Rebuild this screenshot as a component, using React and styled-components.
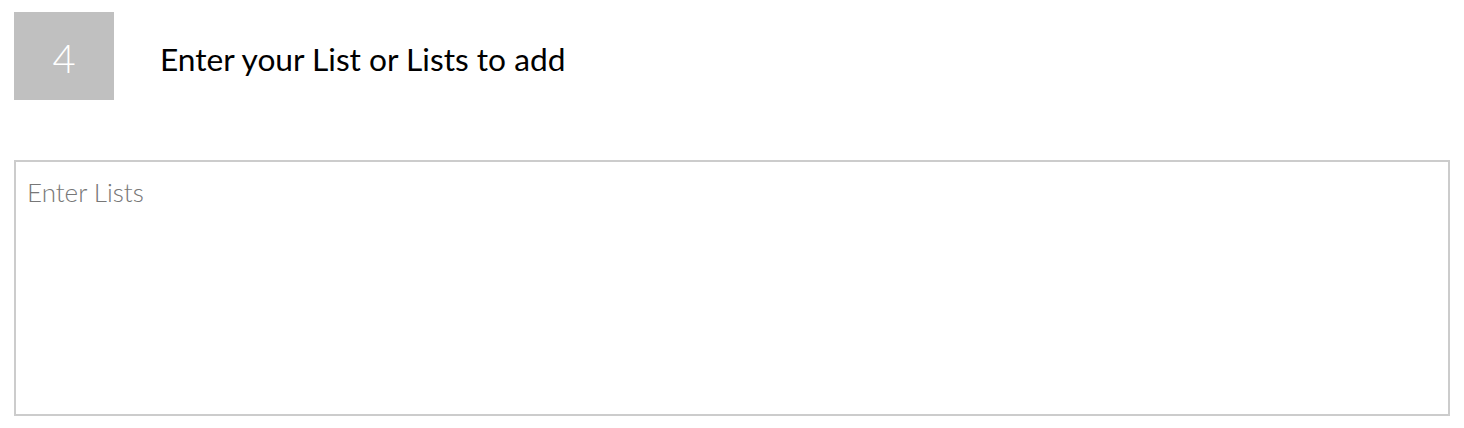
import React from 'react';
import styled, { createGlobalStyle } from 'styled-components';

const GlobalStyle = createGlobalStyle`
	* {
		box-sizing: border-box;
	}
	body {
		margin: 0;
		background: #ffffff;
		font-family: Lato, "Noto Sans", sans-serif;
	}
`;

const Page = styled.div`
	padding: 12px 14px 0 14px;
`;

const StepHeader = styled.div`
	display: flex;
	align-items: center;
	gap: 46px;
`;

const StepNumber = styled.div`
	width: 100px;
	height: 88px;
	display: flex;
	align-items: center;
	justify-content: center;
	padding-top: 4px;
	background-color: #c0c0c0;
	color: #ffffff;
	font-size: 40px;
	font-weight: 300;
`;

const StepTitle = styled.h2`
	margin: 0;
	padding-top: 6px;
	font-size: 31.7px;
	font-weight: 400;
	color: #000000;
`;

const ListInput = styled.textarea`
	display: block;
	width: 1436px;
	height: 256px;
	margin-top: 60px;
	padding: 14px 11px;
	border: 2px solid #cccccc;
	resize: none;
	font-family: Lato, "Noto Sans", sans-serif;
	font-size: 26px;
	font-weight: 300;
	color: #333333;
	outline: none;

	&::placeholder {
		color: #777777;
	}
`;

export default function App() {
	return (
		<>
			<GlobalStyle />
			<Page>
				<StepHeader>
					<StepNumber>4</StepNumber>
					<StepTitle>Enter your List or Lists to add</StepTitle>
				</StepHeader>
				<ListInput placeholder="Enter Lists" />
			</Page>
		</>
	);
}
